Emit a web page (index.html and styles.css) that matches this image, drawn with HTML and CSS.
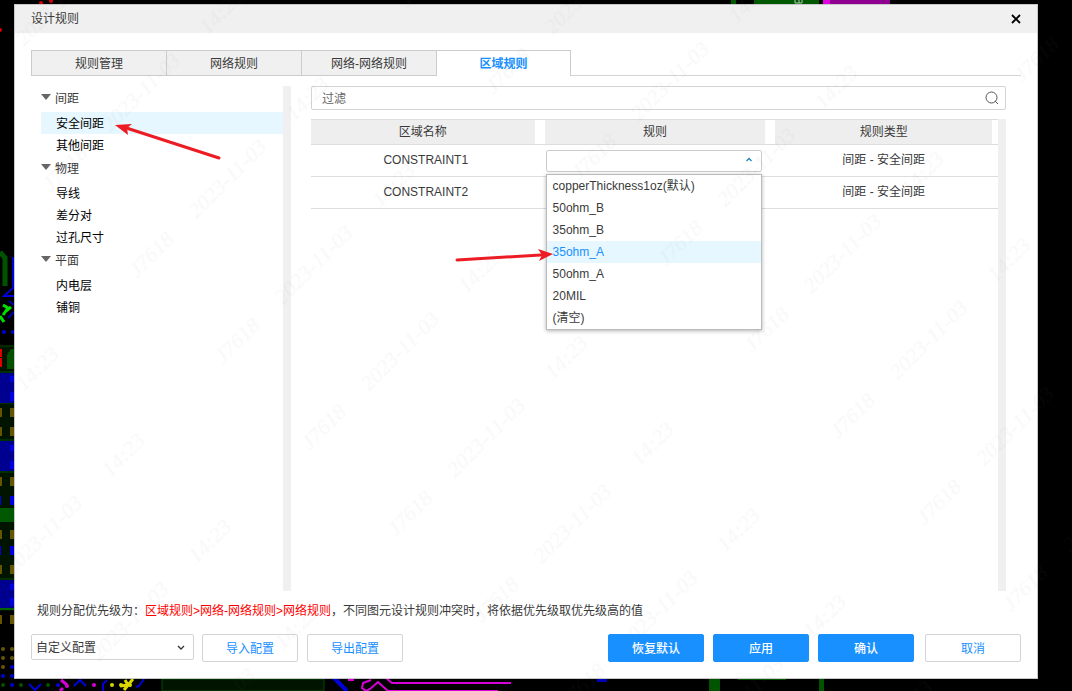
FILE: index.html
```html
<!DOCTYPE html>
<html lang="zh-CN">
<head>
<meta charset="utf-8">
<meta name="viewport" content="width=device-width, initial-scale=1">
<title>设计规则</title>
<link rel="stylesheet" href="styles.css">
</head>
<body>
<svg class="board" viewBox="0 0 1072 691" preserveAspectRatio="none" aria-hidden="true">
  <!-- left edge of the board -->
  <path d="M0 252L5 258V286" fill="none" stroke="#005400" stroke-width="5"/>
  <path d="M13 257V288L4 296H14" fill="none" stroke="#0000d8" stroke-width="2"/>
  <path d="M3 305l5 3-5 7M0 316l4 6M6 311l5-4" fill="none" stroke="#00e000" stroke-width="3"/>
  <path d="M8 318l6-6M9 301l5 4" stroke="#0000a8" stroke-width="2"/>
  <path d="M0 346H14V628H0z" fill="#001400"/>
  <path d="M0 346H14M0 372H14M0 403H14M0 440H14M0 472H14M0 579H14" stroke="#004a00"/>
  <path d="M0 349h2v8h-2zM0 358h2v9h-2z" fill="#e00000"/>
  <path d="M7 355l4-6h3v20H7z" fill="#005000"/>
  <path d="M0 373h14v30H0zM0 441h14v30H0zM0 580h14v28H0z" fill="#000090"/>
  <path d="M10 376h4v6h-4zM10 392h4v9h-4zM10 445h4v6h-4zM10 461h4v8h-4zM0 496h1v9h-1zM10 496h4v9h-4zM0 546h1v9h-1zM10 546h4v9h-4zM10 584h4v6h-4zM10 598h4v8h-4z" fill="#0000e0"/>
  <path d="M0 408h2v9h-2zM10 408h4v9h-4zM0 427h2v9h-2zM10 427h4v9h-4zM0 477h2v9h-2zM10 477h4v9h-4zM0 530h2v9h-2zM10 530h4v9h-4zM0 565h2v9h-2zM10 565h4v9h-4z" fill="#665500"/>
  <path d="M0 508h14v14H0z" fill="#005800"/>
  <path d="M0 609H14" stroke="#006400" stroke-width="2"/>
  <path d="M0 611H14V691H0z" fill="#000"/>
  <path d="M0 615h2v9h-2zM10 615h4v9h-4z" fill="#665500"/>
  <g fill="#665500"><circle cx="3" cy="649" r="2"/><circle cx="12" cy="649" r="2"/><circle cx="3" cy="658" r="2"/><circle cx="12" cy="658" r="2"/><circle cx="3" cy="667" r="2"/></g>
  <g fill="#0000d8"><circle cx="4" cy="332" r="2"/><circle cx="13" cy="332" r="2"/><circle cx="12" cy="667" r="2"/><circle cx="3" cy="676" r="2"/><circle cx="12" cy="676" r="2"/><circle cx="12" cy="685" r="2"/><circle cx="58" cy="685" r="2"/></g>
  <!-- bottom edge -->
  <g fill="#005000"><circle cx="3" cy="685" r="2"/><circle cx="21" cy="685" r="2"/><circle cx="48" cy="685" r="2"/></g>
  <path d="M29 684l6 6 6-6M74 686l6-6 6 6M107 680l-4 4v7M136 687l3-1 5-7" fill="none" stroke="#0000d8" stroke-width="2"/>
  <path d="M61 680l6 5M60 691l3-3" fill="none" stroke="#d800d8" stroke-width="3"/>
  <circle cx="67" cy="686" r="2" fill="#d800d8"/>
  <circle cx="94" cy="685" r="2" fill="#d800d8"/>
  <path d="M125 680l3 5-8 1M133 679l-9 11" fill="none" stroke="#d8d800" stroke-width="3"/>
  <g fill="#d8d800"><circle cx="112" cy="685" r="2"/><circle cx="121" cy="685" r="2"/><circle cx="130" cy="685" r="2"/></g>
  <path d="M162 679H324V691H162z" fill="#001400" stroke="#004a00"/>
  <path d="M333 677l14 14" stroke="#0000d8" stroke-width="4"/>
  <path d="M348 680h6M386 678l6 5H511M371 680l-8 3-1 5 4 3 4-2 8-7 10 9H498" fill="none" stroke="#d800d8" stroke-width="2"/>
  <path d="M597 679h10v3h-10z" fill="#0000b8"/>
  <path d="M709 679h11v12h-11zM819 679h5v12h-5zM738 679h48v1h-48z" fill="#005400"/>
  <!-- top edge -->
  <path d="M731 0h5v4h-5zM754 0h65v4h-65z" fill="#005800"/>
  <path d="M823 0h67v4h-67z" fill="#900090"/>
  <path d="M823 0h7v4h-7z" fill="#e000e0"/>
  <path d="M795 0v3h4v-3M799 3h3v-3" fill="none" stroke="#b0c8b0"/>
  <g fill="#d80000"><circle cx="41" cy="3" r="2"/><circle cx="51" cy="1" r="2"/><circle cx="0" cy="30" r="2"/></g>
</svg>

<main class="dialog" role="dialog" aria-labelledby="dialog-title">
  <header class="titlebar">
    <h1 class="title" id="dialog-title">设计规则</h1>
    <button class="close" type="button" aria-label="关闭">
      <svg width="10" height="10" viewBox="0 0 10 10"><path d="M1 1l8 8M9 1L1 9" stroke="#000" stroke-width="1.8"/></svg>
    </button>
  </header>

  <div class="content">
    <div class="tabs" role="tablist">
      <button class="tab" type="button" role="tab">规则管理</button>
      <button class="tab" type="button" role="tab">网络规则</button>
      <button class="tab" type="button" role="tab">网络-网络规则</button>
      <button class="tab tab-active" type="button" role="tab" aria-selected="true">区域规则</button>
    </div>

    <div class="panes">
      <nav class="tree">
        <h2 class="group"><svg class="caret" width="10" height="6" viewBox="0 0 10 6"><path d="M0 0h10L5 6z"/></svg>间距</h2>
        <ul class="items">
          <li class="item item-active">安全间距</li>
          <li class="item">其他间距</li>
        </ul>
        <h2 class="group"><svg class="caret" width="10" height="6" viewBox="0 0 10 6"><path d="M0 0h10L5 6z"/></svg>物理</h2>
        <ul class="items">
          <li class="item">导线</li>
          <li class="item">差分对</li>
          <li class="item">过孔尺寸</li>
        </ul>
        <h2 class="group"><svg class="caret" width="10" height="6" viewBox="0 0 10 6"><path d="M0 0h10L5 6z"/></svg>平面</h2>
        <ul class="items">
          <li class="item">内电层</li>
          <li class="item">铺铜</li>
        </ul>
      </nav>
      <div class="track"></div>

      <section class="rules">
        <div class="search">
          <input class="search-input" type="text" placeholder="过滤" aria-label="过滤">
          <svg class="search-icon" width="14" height="14" viewBox="0 0 14 14"><circle cx="6.5" cy="6.5" r="5.5" fill="none" stroke="#555"/><path d="M10 10l3 3" stroke="#555"/></svg>
        </div>
        <div class="table-area">
          <div class="table-box">
            <table class="table">
              <colgroup><col class="col-name"><col class="col-rule"><col></colgroup>
              <thead>
                <tr>
                  <th><span class="head">区域名称</span></th>
                  <th><span class="head">规则</span></th>
                  <th><span class="head">规则类型</span></th>
                </tr>
              </thead>
              <tbody>
                <tr>
                  <td>CONSTRAINT1</td>
                  <td class="rule-cell">
                    <div class="combo">
                      <input class="combo-input" type="text" role="combobox" aria-expanded="true" aria-controls="rule-menu" aria-label="规则 CONSTRAINT1">
                      <svg class="combo-icon" width="8" height="5" viewBox="0 0 8 5"><path d="M1.500 4L4 1.500 6.500 4" fill="none" stroke="#1c84c0" stroke-width="1.300"/></svg>
                      <ul class="menu" id="rule-menu" role="listbox">
                        <li class="option" role="option">copperThickness1oz(默认)</li>
                        <li class="option" role="option">50ohm_B</li>
                        <li class="option" role="option">35ohm_B</li>
                        <li class="option option-active" role="option" aria-selected="true">35ohm_A</li>
                        <li class="option" role="option">50ohm_A</li>
                        <li class="option" role="option">20MIL</li>
                        <li class="option" role="option">(清空)</li>
                      </ul>
                    </div>
                  </td>
                  <td>间距 - 安全间距</td>
                </tr>
                <tr>
                  <td>CONSTRAINT2</td>
                  <td class="rule-cell">
                    <div class="combo"><input class="combo-input" type="text" role="combobox" aria-expanded="false" aria-label="规则 CONSTRAINT2"></div>
                  </td>
                  <td>间距 - 安全间距</td>
                </tr>
              </tbody>
            </table>
          </div>
          <div class="track"></div>
        </div>
      </section>
    </div>

    <p class="note">规则分配优先级为：<span class="priority">区域规则&gt;网络-网络规则&gt;网络规则</span>，不同图元设计规则冲突时，将依据优先级取优先级高的值</p>

    <footer class="actions">
      <div class="profile">
        <select class="profile-select" aria-label="配置"><option>自定义配置</option></select>
        <svg class="profile-icon" width="8" height="5" viewBox="0 0 8 5"><path d="M1 1l3 3 3-3" fill="none" stroke="#333" stroke-width="1.3"/></svg>
      </div>
      <div class="buttons">
        <button class="btn" type="button">导入配置</button>
        <button class="btn" type="button">导出配置</button>
      </div>
      <div class="buttons buttons-end">
        <button class="btn btn-primary" type="button">恢复默认</button>
        <button class="btn btn-primary" type="button">应用</button>
        <button class="btn btn-primary" type="button">确认</button>
        <button class="btn btn-cancel" type="button">取消</button>
      </div>
    </footer>
  </div>
</main>

<svg class="arrows" width="560" height="270" viewBox="0 0 560 270" aria-hidden="true">
  <path d="M219 158L128 128.500" stroke="#ed1c24" stroke-width="3" stroke-linecap="round"/>
  <path d="M115 125l17-1-5 4 1 7z" fill="#ed1c24"/>
  <path d="M457 260L541 255" stroke="#ed1c24" stroke-width="3" stroke-linecap="round"/>
  <path d="M553 254l-15-5 4 6-3 6z" fill="#ed1c24"/>
</svg>

<svg class="watermark" aria-hidden="true">
  <defs>
    <pattern id="stamp" x="-40" y="0" width="382" height="122" patternUnits="userSpaceOnUse" patternTransform="rotate(-45)">
      <text x="24" y="50">2023-11-03</text>
      <text x="162" y="50">14:23</text>
      <text x="322" y="50">J7618</text>
    </pattern>
  </defs>
  <rect width="100%" height="100%" fill="url(#stamp)"/>
</svg>
</body>
</html>
```

FILE: styles.css
```css
* {
  box-sizing: border-box;
}

body {
  display: flex;
  min-height: 100vh;
  margin: 0;
  padding: 4px 34px 12px 14px;
  position: relative;
  background: #000;
  color: #3a3a3a;
  font: 12px/18px "Liberation Sans", "Noto Sans CJK SC", sans-serif;
}

button,
input,
select {
  font: inherit;
  color: inherit;
}

h1,
h2,
p,
ul {
  margin: 0;
  padding: 0;
  font-size: 12px;
  font-weight: 400;
  list-style: none;
}

svg {
  display: block;
}

.board {
  position: absolute;
  inset: 0;
  width: 100%;
  height: 100%;
}

.dialog {
  position: relative;
  display: flex;
  flex: 1;
  flex-direction: column;
  min-width: 0;
  background: #fff;
  border: 1px solid #c8c8c8;
}

.titlebar {
  display: flex;
  align-items: center;
  justify-content: space-between;
  height: 28px;
  padding: 0 16px;
  background: #f0f0f0;
}

.title {
  line-height: 20px;
}

.close {
  padding: 0;
  border: 0;
  background: none;
}

.content {
  display: flex;
  flex: 1;
  flex-direction: column;
  padding: 17px 16px 16px;
}

.tabs {
  display: flex;
  height: 26px;
  box-shadow: inset 0 -1px #d4d4d4;
}

.tab {
  width: 135px;
  padding: 2px 0 0;
  border: 1px solid #ccc;
  border-right: 0;
  background: #f0f0f0;
}

.tab-active {
  padding: 0;
  border-right: 1px solid #ccc;
  border-bottom: 0;
  background: #fff;
  color: #1890ff;
  font-weight: 700;
}

.panes {
  display: flex;
  flex: 1;
  padding: 10px 15px 0 10px;
}

.tree {
  width: 242px;
}

.group {
  display: flex;
  align-items: center;
  gap: 4px;
  height: 26px;
}

.caret {
  margin-bottom: 4px;
  fill: #666;
}

.item {
  height: 22px;
  padding-left: 15px;
  color: #000;
  line-height: 24px;
}

.item-active {
  background: #e6f7ff;
}

.track {
  width: 8px;
  background: #f0f0f0;
}

.rules {
  display: flex;
  flex: 1;
  flex-direction: column;
  gap: 9px;
  min-width: 0;
  margin-left: 20px;
}

.search {
  display: flex;
  align-items: center;
  height: 24px;
  padding: 0 6px 0 10px;
  border: 1px solid #d4d4d4;
  border-radius: 2px;
}

.search-input {
  flex: 1;
  padding: 2px 0 0;
  border: 0;
  outline: 0;
  background: none;
}

.search-input::placeholder {
  color: #666;
}

.table-area {
  display: flex;
  flex: 1;
}

.table-box {
  flex: 1;
}

.table {
  width: 100%;
  table-layout: fixed;
  border-spacing: 0;
  text-align: center;
}

.col-name {
  width: 34%;
}

.col-rule {
  width: 33.6%;
}

th {
  padding: 0 10px 0 0;
  border-top: 1px solid #ddd;
  border-bottom: 1px solid #ddd;
  font-weight: 400;
}

th:last-child {
  padding-right: 6px;
}

.head {
  display: block;
  background: #eee;
  line-height: 24px;
}

td {
  height: 32px;
  padding: 0 4px 2px 0;
  border-bottom: 1px solid #ddd;
}

td:last-child {
  padding-right: 6px;
}

.rule-cell {
  padding: 0 13px 0 1px;
}

.combo {
  position: relative;
}

.combo-input {
  display: block;
  width: 100%;
  height: 22px;
  padding: 0 20px 0 6px;
  border: 1px solid #ccc;
  border-radius: 2px;
  background: #fff;
}

.combo-icon {
  position: absolute;
  top: 7px;
  right: 9px;
}

.menu {
  position: absolute;
  z-index: 1;
  top: 24px;
  left: 0;
  right: 0;
  border: 1px solid #bbb;
  background: #fff;
  box-shadow: 0 1px 4px rgba(0, 0, 0, 0.3);
  text-align: left;
}

.option {
  padding-left: 6px;
  line-height: 22px;
}

.option-active {
  background: #e6f7ff;
  color: #1890ff;
}

.note {
  padding: 11px 6px 14px;
}

.priority {
  color: #f00;
}

.actions {
  display: flex;
  align-items: flex-start;
  gap: 8px;
}

.profile {
  position: relative;
}

.profile-select {
  display: block;
  width: 163px;
  height: 26px;
  padding: 2px 4px 0;
  border: 1px solid #d4d4d4;
  border-radius: 2px;
  background: #fff;
  appearance: none;
}

.profile-icon {
  position: absolute;
  top: 11px;
  right: 9px;
}

.buttons {
  display: flex;
  gap: 9px;
}

.buttons-end {
  margin-left: auto;
}

.btn {
  width: 96px;
  height: 28px;
  padding: 2px 0 0;
  border: 1px solid #d4d4d4;
  border-radius: 2px;
  background: #fff;
  color: #1890ff;
}

.btn-primary {
  border-color: #1890ff;
  background: #1890ff;
  color: #fff;
  font-weight: 500;
}

.btn-cancel {
  margin-left: 2px;
}

.arrows {
  position: absolute;
  top: 0;
  left: 0;
  z-index: 2;
  pointer-events: none;
}

.watermark {
  position: absolute;
  inset: 0;
  z-index: 3;
  width: 100%;
  height: 100%;
  fill: #808080;
  font: italic 22px "Liberation Serif", serif;
  opacity: 0.05;
  pointer-events: none;
}
```
